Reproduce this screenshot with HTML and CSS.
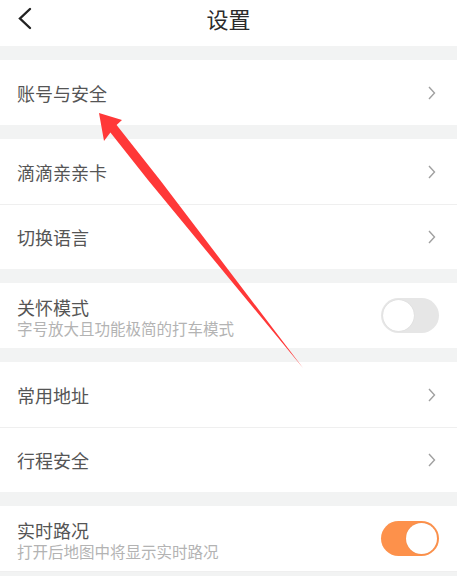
FILE: index.html
```html
<!DOCTYPE html>
<html lang="zh-CN">
<head>
<meta charset="utf-8">
<title>设置</title>
<link rel="stylesheet" href="styles.css">
</head>
<body>
<div class="page">
  <header class="topbar">
    <svg class="back" width="20" height="24" viewBox="0 0 20 24"><polyline points="13,3 3,12.5 13,22" fill="none" stroke="#222" stroke-width="2.4" stroke-linecap="round" stroke-linejoin="miter"/></svg>
    <h1 class="title">设置</h1>
  </header>

  <section class="group">
    <div class="row"><span class="label">账号与安全</span><svg class="chev" width="10" height="16" viewBox="0 0 10 16"><polyline points="2,2 7.5,8 2,14" fill="none" stroke="#a0a0a0" stroke-width="1.4"/></svg></div>
  </section>

  <section class="group">
    <div class="row"><span class="label">滴滴亲亲卡</span><svg class="chev" width="10" height="16" viewBox="0 0 10 16"><polyline points="2,2 7.5,8 2,14" fill="none" stroke="#a0a0a0" stroke-width="1.4"/></svg></div>
    <div class="row"><span class="label">切换语言</span><svg class="chev" width="10" height="16" viewBox="0 0 10 16"><polyline points="2,2 7.5,8 2,14" fill="none" stroke="#a0a0a0" stroke-width="1.4"/></svg></div>
  </section>

  <section class="group">
    <div class="row">
      <div class="texts"><span class="label">关怀模式</span><span class="sub">字号放大且功能极简的打车模式</span></div>
      <span class="switch"><span class="knob"></span></span>
    </div>
  </section>

  <section class="group">
    <div class="row"><span class="label">常用地址</span><svg class="chev" width="10" height="16" viewBox="0 0 10 16"><polyline points="2,2 7.5,8 2,14" fill="none" stroke="#a0a0a0" stroke-width="1.4"/></svg></div>
    <div class="row"><span class="label">行程安全</span><svg class="chev" width="10" height="16" viewBox="0 0 10 16"><polyline points="2,2 7.5,8 2,14" fill="none" stroke="#a0a0a0" stroke-width="1.4"/></svg></div>
  </section>

  <section class="group last">
    <div class="row">
      <div class="texts"><span class="label">实时路况</span><span class="sub">打开后地图中将显示实时路况</span></div>
      <span class="switch on"><span class="knob"></span></span>
    </div>
  </section>

  <svg class="annot" width="457" height="576" viewBox="0 0 457 576">
    <polygon points="99,113 122,120 116.6,125.1 160,180 303,368 148,180 110.4,132.4 104,141" fill="#ff3838"/>
  </svg>
</div>
</body>
</html>
```

FILE: styles.css
```css
html, body {
  margin: 0;
  padding: 0;
}
body {
  width: 457px;
  height: 576px;
  overflow: hidden;
  background: #f2f3f3;
  font-family: "Noto Sans CJK SC", "Noto Sans", sans-serif;
}
.page {
  position: relative;
  width: 457px;
  height: 576px;
}
.topbar {
  position: relative;
  height: 46px;
  background: #fff;
  display: flex;
  justify-content: center;
  align-items: flex-start;
}
.back {
  position: absolute;
  left: 17px;
  top: 6px;
}
.title {
  margin: 0;
  font-size: 22px;
  font-weight: 400;
  line-height: 37px;
  color: #2b2b2b;
}
.group {
  margin-top: 14px;
  background: #fff;
}
.row {
  height: 65px;
  display: flex;
  align-items: center;
  justify-content: space-between;
  padding: 0 20px 0 17px;
  box-sizing: border-box;
}
.row + .row {
  border-top: 1px solid #efefef;
}
.group.last {
  border-bottom: 1px solid #efefef;
}
.label {
  font-size: 18px;
  line-height: 22px;
  color: #555;
}
.texts {
  display: flex;
  flex-direction: column;
  gap: 2px;
  padding-top: 3px;
}
.texts .label {
  line-height: 20px;
}
.sub {
  font-size: 15.5px;
  line-height: 18px;
  color: #b3b3b3;
}
.switch {
  width: 58px;
  height: 35px;
  border-radius: 18px;
  background: #e6e6e6;
  box-sizing: border-box;
  padding: 2px;
  display: flex;
  justify-content: flex-start;
  margin-right: -2px;
}
.switch .knob {
  width: 31px;
  height: 31px;
  border-radius: 50%;
  background: #fff;
  box-shadow: 0 0 1px rgba(0,0,0,0.15);
}
.switch.on {
  background: #fd914b;
  justify-content: flex-end;
}
.annot {
  position: absolute;
  left: 0;
  top: 0;
  pointer-events: none;
}
```
